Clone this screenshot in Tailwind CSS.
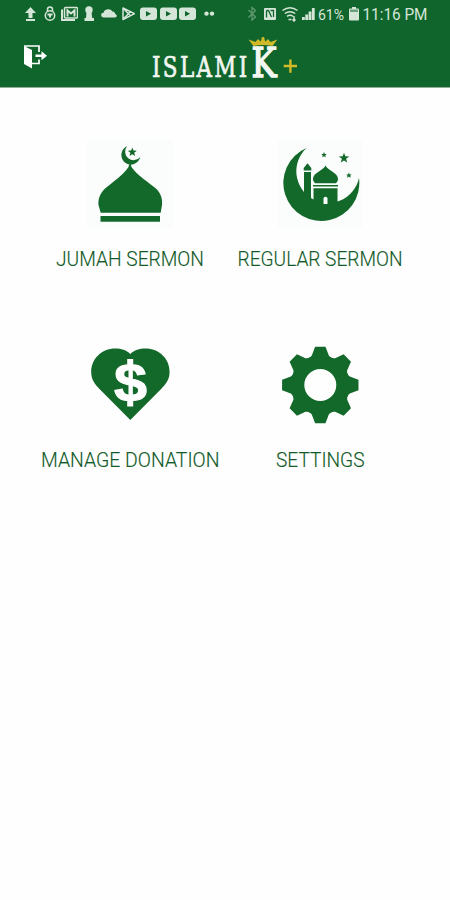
<!DOCTYPE html>
<html lang="en">
<head>
    <meta charset="UTF-8">
    <meta name="viewport" content="width=device-width, initial-scale=1.0">
    <title>Islamik+</title>
    <script src="https://cdn.jsdelivr.net/npm/@tailwindcss/browser@4"></script>
</head>
<body class="bg-[#fefefe] font-['Roboto',sans-serif]">

    <div class="h-screen overflow-hidden">
        <!-- Header -->
        <header class="h-[88px] bg-[#10652c] border-b border-[#8fae98]">
            <!-- Status bar -->
            <div class="flex justify-between h-7 pl-[25px] pr-[20px] text-[#d5e6d8]">
                <div class="flex">
                    <svg class="w-[11px] h-7" viewBox="25 0 11 28" fill="currentColor"><path d="M30.5 7l5.5 6h-3.5v5h-4v-5H25zM26 19h9v2h-9z"/></svg>
                    <svg class="w-3 h-7 ml-2" viewBox="44 0 12 28" fill="none" stroke="currentColor" stroke-width="1.500"><path d="M47.500 12V9.500a2.500 2.500 0 0 1 5 0V12"/><circle cx="50" cy="15.500" r="4.700"/><path d="M47.500 14.500h5M50 14v3.500" stroke-width="2"/></svg>
                    <svg class="w-[17px] h-7 ml-[5px]" viewBox="61 0 17 28" fill="none" stroke="currentColor"><path d="M62 9.500v10.500h13" stroke-width="2"/><rect x="64.500" y="7.500" width="13" height="10.500" rx="1" stroke-width="1.500"/><path d="M67.500 16.500v-6l3.500 3 3.500-3v6" stroke-width="2"/></svg>
                    <svg class="w-[10px] h-7 ml-1.5" viewBox="84 0 10 28" fill="currentColor"><circle cx="89" cy="10" r="3.700"/><path d="M86.500 12h5l.7 6H94v3h-9.500v-3h1.500z"/></svg>
                    <svg class="w-4 h-7 ml-[7px]" viewBox="101 0 16 28" fill="currentColor"><path d="M103.500 17.500a2.400 2.400 0 0 1 0-4.800 5 5 0 0 1 9-1.200c2 .3 2.600 1.400 2.700 2.600 2.200.4 2 3.400-.2 3.400z"/></svg>
                    <svg class="w-[13px] h-7 ml-[5px]" viewBox="122 0 13 28" fill="none" stroke="currentColor" stroke-width="1.500" stroke-linejoin="round"><path d="M123 8v11.500l11.500-5.800zM123 8l7.500 8M123 19.500l7.500-8"/></svg>
                    <svg class="w-[17px] h-7 ml-[5px]" viewBox="140 0 17 28"><rect x="140" y="7.500" width="17" height="12.500" rx="3" fill="currentColor"/><path d="M146 11l5 2.700-5 2.800z" fill="#10652c"/></svg>
                    <svg class="w-[17px] h-7 ml-[2.500px]" viewBox="140 0 17 28"><rect x="140" y="7.500" width="17" height="12.500" rx="3" fill="currentColor"/><path d="M146 11l5 2.700-5 2.800z" fill="#10652c"/></svg>
                    <svg class="w-[17px] h-7 ml-[2.500px]" viewBox="140 0 17 28"><rect x="140" y="7.500" width="17" height="12.500" rx="3" fill="currentColor"/><path d="M146 11l5 2.700-5 2.800z" fill="#10652c"/></svg>
                    <svg class="w-3 h-7 ml-2" viewBox="204 0 12 28" fill="currentColor"><circle cx="206.500" cy="13.600" r="2.200"/><circle cx="212" cy="13.600" r="2.200"/></svg>
                </div>
                <div class="flex">
                    <svg class="w-[9px] h-7" viewBox="248 0 9 28" fill="none" stroke="#5f9a70" stroke-width="1.300"><path d="M248.500 10l7 7-3.500 3V7.500l3.500 3-7 7"/></svg>
                    <svg class="w-3 h-7 ml-[7px]" viewBox="264 0 12 28"><rect x="264" y="8" width="12" height="12" rx="1" fill="currentColor"/><path d="M266.500 10.500v7M266.500 10.500h2l3 6.500M270.500 10.500h3v6.500" fill="none" stroke="#10652c" stroke-width="1.300"/></svg>
                    <svg class="w-4 h-7 ml-1.5" viewBox="282 0 16 28" fill="none" stroke="currentColor" stroke-width="1.500"><path d="M282.500 10.500q7.500-5.500 15 0M284.800 13.500q5.200-3.600 10.400 0M287 16.300q3-1.900 6 0"/><path d="M288.500 19.500h3M294 16v5M292.500 19.500l1.500 1.500 1.500-1.500"/></svg>
                    <svg class="w-[13px] h-7 ml-1" viewBox="302 0 13 28" fill="currentColor"><path d="M302 17h2.800v3H302zM305.300 14.500h2.800V20h-2.800zM308.600 11.500h2.800V20h-2.800zM311.900 8h2.800v12h-2.800z"/></svg>
                    <svg class="w-[29px] h-7 ml-[3px]" viewBox="318 0 29 28" fill="currentColor"><text x="318" y="20" font-size="15" textLength="26" lengthAdjust="spacingAndGlyphs">61%</text></svg>
                    <svg class="w-[10px] h-7 ml-0.5" viewBox="349 0 10 28" fill="currentColor"><path d="M352 7h4v2h-4z"/><rect x="349" y="8.500" width="10" height="12" rx="1"/><path d="M350 9.500h8v2.500h-8z" fill="#6b9f79"/></svg>
                    <svg class="w-[69px] h-7 ml-0.5" viewBox="361 0 69 28" fill="currentColor"><text x="362.500" y="20" font-size="16" textLength="65" lengthAdjust="spacingAndGlyphs">11:16 PM</text></svg>
                </div>
            </div>

            <!-- Exit button + logo -->
            <div class="flex h-[59px] pl-[23px]">
                <svg class="w-6 h-[59px]" viewBox="23 28 24 59" fill="none">
                    <path d="M24 46l8 4v18.500L24 64z" fill="#fff"/>
                    <path d="M24 46h15v6M39 59.500V63.500h-7" stroke="#fff" stroke-width="1.700"/>
                    <path d="M35.500 54.500h6V51.300l5.500 4.400-5.500 4.500V57h-6z" fill="#fff"/>
                </svg>
                <svg class="w-[150px] h-[59px] ml-[103px]" viewBox="150 28 150 59" font-family="'DejaVu Serif', serif" fill="#f2f7f2" stroke="#f2f7f2">
                    <!-- letters are squeezed, then spaced out again -->
                    <text transform="translate(152 77.300) scale(.78 1)" font-size="27.500" stroke-width=".7" textLength="122" lengthAdjust="spacing">ISLAMI</text>
                    <text x="251.500" y="77" font-size="41" stroke-width="1.600" textLength="25" lengthAdjust="spacingAndGlyphs">K</text>
                    <g fill="#d2b928" stroke="none">
                        <path d="M248.500 39.500l7 2.500 2.500-3 2.500 2.500 2.500-4.500 2.500 4.500 2.500-2.500 2.500 3 7-2.500-5 6.500q-9.500-2-19 0z"/>
                        <circle cx="263" cy="38.500" r="1.600"/>
                        <path d="M289.200 59.500h2.400v5.300h5.400v2.400h-5.400v5.600h-2.400v-5.600h-5.500v-2.400h5.500z"/>
                    </g>
                </svg>
            </div>
        </header>

        <!-- Menu -->
        <main class="grid grid-cols-2 gap-y-[68px] px-[35px] pt-[52px] text-[#125a28]">
            <a href="#" class="flex flex-col items-center">
                <svg class="w-[86px] h-[88px] bg-[#fafdfb]" viewBox="87 140 86 88" fill="#13692a">
                    <path d="M127 146.200A9.600 9.600 0 1 0 140.300 157A8.500 8.500 0 1 1 127 146.200z"/>
                    <path d="M132.300 147.500l1.200 3.100 3.300.1-2.600 2.100.9 3.200-2.800-1.800-2.800 1.800.9-3.200-2.600-2.100 3.300-.1z"/>
                    <path d="M129.500 163h1l1 4c6 9 17 15 25 22 5 5 6 11 5.500 16l-1.300 7.700h-60L98.500 205c-.5-5 1-11 6-16 8-7 18-13 24-22z"/>
                    <path d="M100.500 216h59.500v5.700h-59.500z"/>
                </svg>
                <svg class="w-[190px] h-7 mt-[17px]" viewBox="35 245 190 28" fill="currentColor"><text x="56" y="266" font-size="19.500" font-weight="300" stroke="currentColor" stroke-width=".15" textLength="148" lengthAdjust="spacingAndGlyphs">JUMAH SERMON</text></svg>
            </a>
            <a href="#" class="flex flex-col items-center">
                <svg class="w-[86px] h-[88px] bg-[#fafdfb]" viewBox="277 140 86 88" fill="#13692a">
                    <path d="M306.500 148A38 38 0 1 0 359 178A31.700 31.700 0 1 1 306.500 148z"/>
                    <path d="M307.500 163.300l3.800 4.700v2.500h-7.600v-2.500zM304 172h7v35h-7z"/>
                    <path d="M325.500 165.500c2 5 12.500 7 12.500 13.500 0 2-1 3-2 4.300h-21c-1-1.300-2-2.300-2-4.300 0-6.500 10.500-8.500 12.500-13.500zM313 185h25v1.500h-25zM313.500 188.200h24V207h-24z"/>
                    <path d="M323.500 204v-6q2-2.500 4 0v6z" fill="#fafdfb"/>
                    <path d="M344 152.700l1.300 3.600 3.900.1-3.100 2.400 1.100 3.800-3.200-2.200-3.200 2.200 1.100-3.800-3.100-2.400 3.900-.1z"/>
                    <path d="M324 152l.8 1.900 2 .1-1.500 1.300.5 2-1.800-1.100-1.800 1.100.5-2-1.500-1.300 2-.1zM348.900 172.500l.8 1.900 2 .1-1.500 1.300.5 2-1.800-1.100-1.800 1.100.5-2-1.500-1.300 2-.1z"/>
                </svg>
                <svg class="w-[190px] h-7 mt-[17px]" viewBox="225 245 190 28" fill="currentColor"><text x="237.500" y="266" font-size="19.500" font-weight="300" stroke="currentColor" stroke-width=".15" textLength="165" lengthAdjust="spacingAndGlyphs">REGULAR SERMON</text></svg>
            </a>
            <a href="#" class="flex flex-col items-center">
                <svg class="w-[86px] h-[88px]" viewBox="87 341 86 88">
                    <path d="M130.300 354c4-4 9-5.500 15-5.500 14 0 24.500 10.500 24.300 23.500 0 7-3.500 12-8.500 17L130.300 420 99.500 389c-5-5-8.300-10-8.300-17 0-13 10.300-23.500 24.100-23.500 6 0 11 1.500 15 5.500z" fill="#13692a"/>
                    <text x="114" y="400.500" font-family="'Liberation Sans', sans-serif" font-weight="bold" font-size="54" fill="#fff" stroke="#fff" stroke-width="1" textLength="33" lengthAdjust="spacingAndGlyphs">$</text>
                    <path d="M127.200 359h6v6h-6zM127.200 400h6v6.500h-6z" fill="#fff"/>
                </svg>
                <svg class="w-[190px] h-7 mt-[17px]" viewBox="35 446 190 28" fill="currentColor"><text x="41" y="467" font-size="19.500" font-weight="300" stroke="currentColor" stroke-width=".15" textLength="178.500" lengthAdjust="spacingAndGlyphs">MANAGE DONATION</text></svg>
            </a>
            <a href="#" class="flex flex-col items-center">
                <svg class="w-[86px] h-[88px]" viewBox="277 341 86 88" fill="#13692a">
                    <circle cx="320.300" cy="385" r="22.500" fill="none" stroke="#13692a" stroke-width="13"/>
                    <g transform="translate(320.300 385)">
                        <path id="tooth" d="M-5.200-38.200H5.200L8.500-29.500Q9.500-27.500 13-26.500L10-24H-10L-13-26.500Q-9.500-27.500-8.500-29.500z"/>
                        <use href="#tooth" transform="rotate(45)"/>
                        <use href="#tooth" transform="rotate(90)"/>
                        <use href="#tooth" transform="rotate(135)"/>
                        <use href="#tooth" transform="rotate(180)"/>
                        <use href="#tooth" transform="rotate(225)"/>
                        <use href="#tooth" transform="rotate(270)"/>
                        <use href="#tooth" transform="rotate(315)"/>
                    </g>
                </svg>
                <svg class="w-[190px] h-7 mt-[17px]" viewBox="225 446 190 28" fill="currentColor"><text x="276" y="467" font-size="19.500" font-weight="300" stroke="currentColor" stroke-width=".15" textLength="88.500" lengthAdjust="spacingAndGlyphs">SETTINGS</text></svg>
            </a>
        </main>
    </div>

</body>
</html>
